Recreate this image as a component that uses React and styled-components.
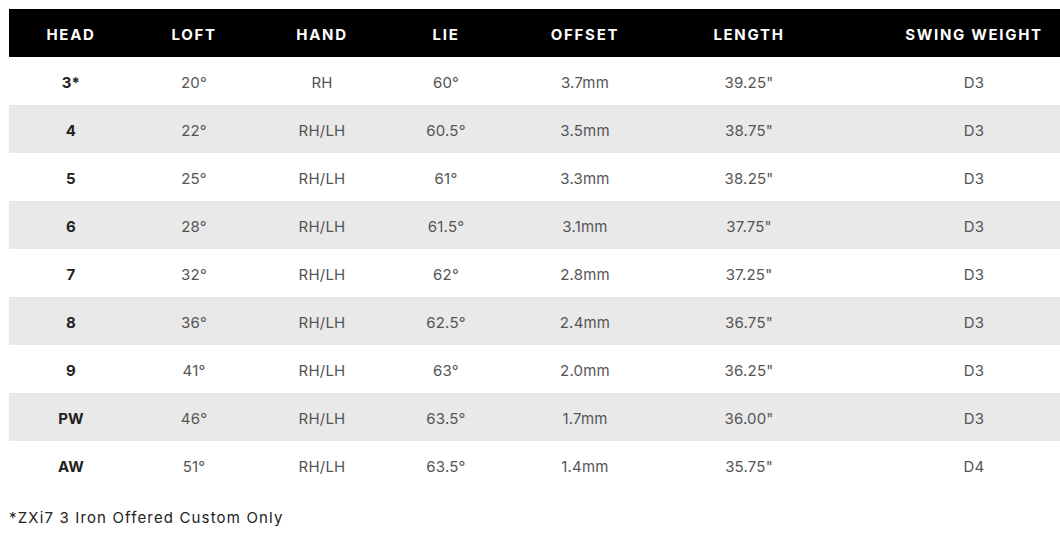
import React from 'react';
import styled, { createGlobalStyle } from 'styled-components';

const GlobalStyle = createGlobalStyle`
  html, body {
    margin: 0;
    padding: 0;
    background: #fff;
  }
  body {
    font-family: Inter, "Noto Sans", sans-serif;
  }
`;

const columns = [
  { key: 'head', label: 'HEAD', width: 124 },
  { key: 'loft', label: 'LOFT', width: 122 },
  { key: 'hand', label: 'HAND', width: 134 },
  { key: 'lie', label: 'LIE', width: 114 },
  { key: 'offset', label: 'OFFSET', width: 164 },
  { key: 'length', label: 'LENGTH', width: 164 },
  { key: 'sw', label: 'SWING WEIGHT', width: 286 },
];

const rows = [
  ['3*', '20°', 'RH', '60°', '3.7mm', '39.25"', 'D3'],
  ['4', '22°', 'RH/LH', '60.5°', '3.5mm', '38.75"', 'D3'],
  ['5', '25°', 'RH/LH', '61°', '3.3mm', '38.25"', 'D3'],
  ['6', '28°', 'RH/LH', '61.5°', '3.1mm', '37.75"', 'D3'],
  ['7', '32°', 'RH/LH', '62°', '2.8mm', '37.25"', 'D3'],
  ['8', '36°', 'RH/LH', '62.5°', '2.4mm', '36.75"', 'D3'],
  ['9', '41°', 'RH/LH', '63°', '2.0mm', '36.25"', 'D3'],
  ['PW', '46°', 'RH/LH', '63.5°', '1.7mm', '36.00"', 'D3'],
  ['AW', '51°', 'RH/LH', '63.5°', '1.4mm', '35.75"', 'D4'],
];

const Page = styled.div`
  width: 100%;
  overflow: hidden;
  padding: 9px 0 0 9px;
  box-sizing: border-box;
`;

const Table = styled.table`
  border-collapse: collapse;
  table-layout: fixed;
  width: 1108px;
`;

const HeadCell = styled.th`
  height: 48px;
  padding: 2px 0 0;
  box-sizing: border-box;
  background: #000;
  color: #fff;
  font-size: 15px;
  font-weight: 700;
  letter-spacing: 1.7px;
  text-align: center;
`;

const Row = styled.tr`
  background: ${p => (p.$shaded ? '#e9e9e9' : '#fff')};
`;

const Cell = styled.td`
  height: 48px;
  padding: 2px 0 0;
  box-sizing: border-box;
  text-align: center;
  font-size: 15px;
  letter-spacing: 0.2px;
  color: ${p => (p.$bold ? '#222' : '#555')};
  font-weight: ${p => (p.$bold ? 700 : 400)};
`;

const Note = styled.p`
  margin: 19px 0 0;
  font-size: 15px;
  color: #222;
  letter-spacing: 1.15px;
`;

export default function App() {
  return (
    <>
      <GlobalStyle />
      <Page>
        <Table>
          <colgroup>
            {columns.map(c => (
              <col key={c.key} style={{ width: c.width }} />
            ))}
          </colgroup>
          <thead>
            <tr>
              {columns.map(c => (
                <HeadCell key={c.key}>{c.label}</HeadCell>
              ))}
            </tr>
          </thead>
          <tbody>
            {rows.map((r, i) => (
              <Row key={r[0]} $shaded={i % 2 === 1}>
                {r.map((v, j) => (
                  <Cell key={j} $bold={j === 0}>{v}</Cell>
                ))}
              </Row>
            ))}
          </tbody>
        </Table>
        <Note>*ZXi7 3 Iron Offered Custom Only</Note>
      </Page>
    </>
  );
}
